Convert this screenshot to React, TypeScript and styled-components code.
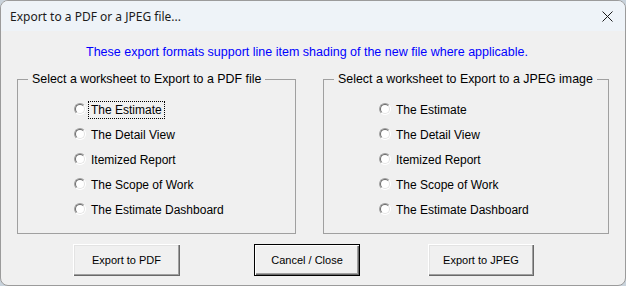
import React from 'react';
import styled, { createGlobalStyle } from 'styled-components';

const GlobalStyle = createGlobalStyle`
  html, body {
    margin: 0;
    padding: 0;
    background: #c9d3dc;
  }
  * {
    box-sizing: border-box;
  }
`;

const Window = styled.div`
  width: 626px;
  height: 286px;
  border: 1px solid #9b9b9b;
  border-radius: 8px;
  overflow: hidden;
  background: #f0f0f0;
  display: flex;
  flex-direction: column;
`;

const TitleBar = styled.div`
  height: 30px;
  flex: none;
  background: #eef3f8;
  display: flex;
  align-items: center;
  justify-content: space-between;
  padding: 0 12px 0 9px;
  font-family: 'Noto Sans', 'Open Sans', sans-serif;
  font-size: 12px;
  color: #1b1b1b;
`;

const CloseGlyph = styled.svg`
  width: 11px;
  height: 11px;
  display: block;
`;

const Body = styled.div`
  flex: 1;
  padding: 0 0 0 16px;
  display: flex;
  flex-direction: column;
  font-family: 'Liberation Sans', Arial, sans-serif;
`;

const Notice = styled.div`
  margin: 14px 0 0 -16px;
  padding-right: 12px;
  text-align: center;
  font-size: 12.5px;
  color: #0000ff;
  height: 15px;
  line-height: 15px;
`;

const Frames = styled.div`
  display: flex;
  gap: 27px;
  margin-top: 12px;
`;

const Frame = styled.fieldset<{ $width: number }>`
  width: ${(p) => p.$width}px;
  height: 162px;
  margin: 0;
  padding: 0;
  border: 1px solid #a0a0a0;
  border-radius: 0;
`;

const Legend = styled.legend<{ $indent: number }>`
  margin-left: ${(p) => p.$indent}px;
  padding: 0 4px;
  font-size: 12.4px;
  color: #000;
  line-height: 15px;
`;

const Options = styled.div<{ $indent: number }>`
  display: flex;
  flex-direction: column;
  gap: 7px;
  padding: 14px 0 0 ${(p) => p.$indent}px;
`;

const Option = styled.label`
  display: flex;
  align-items: center;
  height: 18px;
  gap: 5px;
  font-size: 12px;
  color: #000;
`;

const Radio = styled.span`
  width: 12px;
  height: 12px;
  border-radius: 50%;
  border: 1px solid;
  border-color: #a0a0a0 #ffffff #ffffff #a0a0a0;
  background: #ffffff;
  position: relative;
  flex: none;
  margin-top: -3px;
  &::after {
    content: '';
    position: absolute;
    inset: 0;
    border-radius: 50%;
    border: 1px solid;
    border-color: #6a6a6a #e3e3e3 #e3e3e3 #6a6a6a;
  }
`;

const OptionText = styled.span<{ $focused?: boolean }>`
  padding: 1px 2px;
  border: 1px dotted ${(p) => (p.$focused ? '#000' : 'transparent')};
  margin-left: -3px;
`;

const ButtonRow = styled.div`
  display: flex;
  margin-top: 10px;
  padding-left: 56px;
`;

const Button = styled.button<{ $offset: number; $default?: boolean; $w: number }>`
  margin-left: ${(p) => p.$offset}px;
  width: ${(p) => p.$w}px;
  height: 32px;
  padding: 0;
  background: #f0f0f0;
  font-family: 'Liberation Sans', Arial, sans-serif;
  font-size: 11px;
  color: #000;
  border: ${(p) => (p.$default ? '1px solid #000' : 'none')};
  box-shadow: ${(p) =>
    p.$default
      ? 'inset 1px 1px 0 #ffffff, inset -1px -1px 0 #696969, inset -2px -2px 0 #a0a0a0'
      : 'inset 1px 1px 0 #ffffff, inset -1px -1px 0 #696969, inset -2px -2px 0 #a0a0a0, inset 2px 2px 0 #e3e3e3'};
  cursor: pointer;
`;

const items = [
  'The Estimate',
  'The Detail View',
  'Itemized Report',
  'The Scope of Work',
  'The Estimate Dashboard',
];

export default function App() {
  return (
    <>
      <GlobalStyle />
      <Window>
        <TitleBar>
          <span>Export to a PDF or a JPEG file...</span>
          <CloseGlyph viewBox="0 0 11 11">
            <path d="M0.5 0.5 L10.5 10.5 M10.5 0.5 L0.5 10.5" stroke="#1b1b1b" strokeWidth="1" />
          </CloseGlyph>
        </TitleBar>
        <Body>
          <Notice>These export formats support line item shading of the new file where applicable.</Notice>
          <Frames>
            <Frame $width={279}>
              <Legend $indent={10}>Select a worksheet to Export to a PDF file</Legend>
              <Options $indent={56}>
                {items.map((t, i) => (
                  <Option key={t}>
                    <Radio />
                    <OptionText $focused={i === 0}>{t}</OptionText>
                  </Option>
                ))}
              </Options>
            </Frame>
            <Frame $width={286}>
              <Legend $indent={10}>Select a worksheet to Export to a JPEG image</Legend>
              <Options $indent={55}>
                {items.map((t) => (
                  <Option key={t}>
                    <Radio />
                    <OptionText>{t}</OptionText>
                  </Option>
                ))}
              </Options>
            </Frame>
          </Frames>
          <ButtonRow>
            <Button $offset={0} $w={107}>Export to PDF</Button>
            <Button $offset={74} $w={106} $default>Cancel / Close</Button>
            <Button $offset={68} $w={106}>Export to JPEG</Button>
          </ButtonRow>
        </Body>
      </Window>
    </>
  );
}
